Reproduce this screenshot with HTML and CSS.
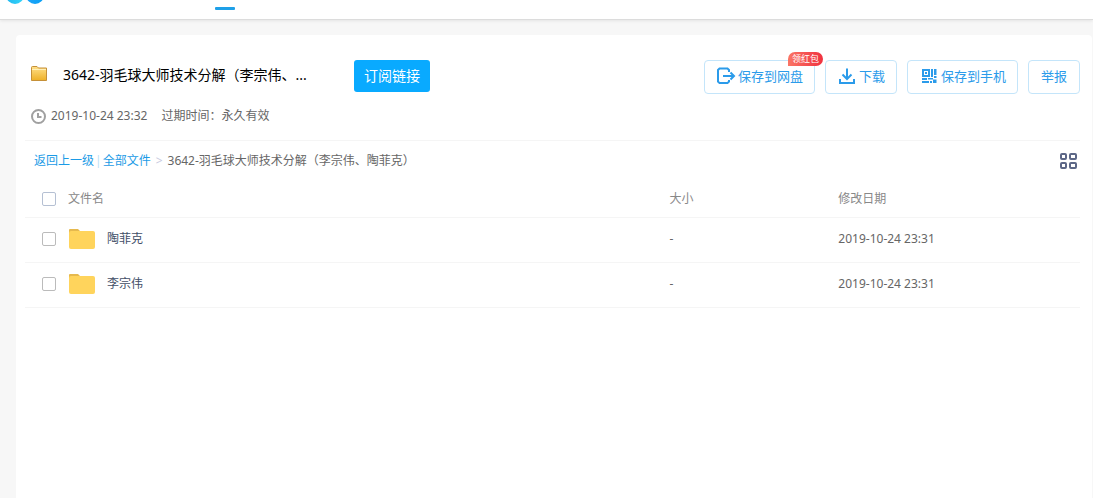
FILE: index.html
```html
<!DOCTYPE html>
<html lang="zh-CN">
<head>
<meta charset="utf-8">
<title>3642-羽毛球大师技术分解</title>
<link rel="stylesheet" href="styles.css">
</head>
<body>
<header class="topbar">
  <svg class="logo" width="40" height="5" viewBox="0 0 40 5" aria-hidden="true">
    <defs>
      <linearGradient id="lg" x1="0" x2="1"><stop offset="0" stop-color="#22b8f0"/><stop offset="1" stop-color="#35d6fa"/></linearGradient>
      <linearGradient id="rg" x1="0" x2="1"><stop offset="0" stop-color="#1ea4f8"/><stop offset="1" stop-color="#08a0f5"/></linearGradient>
    </defs>
    <circle cx="11" cy="-5" r="9" fill="url(#lg)"/>
    <circle cx="31" cy="-5" r="9" fill="url(#rg)"/>
  </svg>
  <span class="tab-line"></span>
</header>
<main class="panel">
  <section class="share">
    <div class="share-head">
      <svg class="share-icon" width="17" height="16" viewBox="0 0 17 16" aria-hidden="true">
        <defs><linearGradient id="fg" x1="0" y1="0" x2="0" y2="1"><stop offset="0" stop-color="#ffe08a"/><stop offset="1" stop-color="#eeb026"/></linearGradient></defs>
        <path d="M.5 14.500V1.500Q.5.500 1.500.500H6L7.500 2H15.500V14.500Z" fill="url(#fg)" stroke="#c59038"/>
        <path d="M1 3.500H15" stroke="#fff0b8"/>
      </svg>
      <h1 class="share-title">3642-羽毛球大师技术分解（李宗伟、...</h1>
      <button class="subscribe" type="button">订阅链接</button>
      <div class="actions">
        <button class="action" type="button">
          <svg width="20" height="18" viewBox="0 0 20 18" fill="none" stroke="#2b9bea" stroke-width="2" aria-hidden="true"><path d="M13 5V3L11.500 1.500H3.500L2 3V14.500L3.500 16H11.500L13 14.500V13M7 9H18M14.500 5.500L18 9L14.500 12.500"/></svg>
          <span>保存到网盘</span>
          <span class="badge">领红包</span>
        </button>
        <button class="action" type="button">
          <svg width="20" height="18" viewBox="0 0 20 18" fill="none" stroke="#2b9bea" stroke-width="2" aria-hidden="true"><path d="M10 1.500V11.500M5.500 7.500L10 12L14.500 7.500M3 12V16H17V12"/></svg>
          <span>下载</span>
        </button>
        <button class="action" type="button">
          <svg width="20" height="18" viewBox="0 0 20 18" fill="#2b9bea" aria-hidden="true"><path fill-rule="evenodd" d="M3 2H11V10H3ZM5 4V8H9V4Z"/><path d="M6 5H8V7H6ZM12 2H14V10H12ZM15 2H17.500V8H15ZM15 9H17.500V11H15ZM3 11H8V13H3ZM9 11H14V12.500H9ZM3 14H10V16H3ZM11 14H13V16H11ZM14 12.500H17.500V16H14Z"/></svg>
          <span>保存到手机</span>
        </button>
        <button class="action" type="button"><span>举报</span></button>
      </div>
    </div>
    <div class="share-meta">
      <svg width="16" height="16" viewBox="0 0 16 16" fill="none" stroke="#a0a0a0" stroke-width="2" aria-hidden="true"><circle cx="7.500" cy="8.500" r="6.500"/><path d="M7 5V9H10.500"/></svg>
      <time class="share-time">2019-10-24 23:32</time>
      <span>过期时间：永久有效</span>
    </div>
  </section>
  <nav class="crumbs">
    <a href="#">返回上一级</a><span class="divider">|</span><a href="#">全部文件</a><span class="arrow">&gt;</span><span>3642-羽毛球大师技术分解（李宗伟、陶菲克）</span>
    <button class="view" type="button" aria-label="网格视图">
      <svg width="18" height="18" viewBox="0 0 18 18" fill="none" stroke="#5d6786" stroke-width="2" aria-hidden="true"><rect x="2" y="2" width="5" height="5" rx="1"/><rect x="11" y="2" width="6" height="5" rx="1"/><rect x="2" y="11" width="5" height="5" rx="1"/><rect x="11" y="11" width="6" height="5" rx="1"/></svg>
    </button>
  </nav>
  <table class="files">
    <thead>
      <tr>
        <th class="col-name"><label class="cell"><input class="check" type="checkbox"><span>文件名</span></label></th>
        <th class="col-size">大小</th>
        <th>修改日期</th>
      </tr>
    </thead>
    <tbody>
      <tr>
        <td><label class="cell"><input class="check" type="checkbox">
          <svg width="27" height="22" viewBox="0 0 27 22" aria-hidden="true"><path d="M1 5V2Q1 1 2 1H10L12 3V5Z" fill="#e6b94e"/><rect x="1" y="3" width="26" height="18" rx="2" fill="#ffd45c"/></svg>
          <span class="name">陶菲克</span></label></td>
        <td>-</td>
        <td>2019-10-24 23:31</td>
      </tr>
      <tr>
        <td><label class="cell"><input class="check" type="checkbox">
          <svg width="27" height="22" viewBox="0 0 27 22" aria-hidden="true"><path d="M1 5V2Q1 1 2 1H10L12 3V5Z" fill="#e6b94e"/><rect x="1" y="3" width="26" height="18" rx="2" fill="#ffd45c"/></svg>
          <span class="name">李宗伟</span></label></td>
        <td>-</td>
        <td>2019-10-24 23:31</td>
      </tr>
    </tbody>
  </table>
</main>
</body>
</html>
```
FILE: styles.css
```css
* { box-sizing: border-box; }

body {
  margin: 0;
  min-height: 100vh;
  display: flex;
  flex-direction: column;
  background: #f7f7f7;
  color: #666;
  font: 12px/16px "Noto Sans", "Noto Sans CJK SC", sans-serif;
}

button {
  padding: 0;
  border: 0;
  background: none;
  font: inherit;
}

svg { flex: none; display: block; }

.topbar {
  display: flex;
  gap: 171px;
  height: 20px;
  padding-left: 4px;
  background: #fff;
  border-bottom: 1px solid #dcdcdc;
  box-shadow: 0 1px 3px rgba(0, 0, 0, 0.08);
}

.tab-line {
  width: 20px;
  height: 3px;
  margin-top: 7px;
  border-radius: 1px;
  background: #1ea0e8;
}

.panel {
  flex: 1;
  margin: 15px 1px 0 16px;
  padding: 25px 12px 0 9px;
  border-radius: 4px 4px 0 0;
  background: #fff;
}

.share {
  padding: 0 0 16px 6px;
  border-bottom: 1px solid #f5f5f5;
}

.share-head { display: flex; height: 34px; }

.share-icon { margin: 6px 15px 0 0; }

.share-title {
  width: 248px;
  margin: 0;
  color: #000;
  font-size: 14px;
  font-weight: 400;
  line-height: 30px;
  white-space: nowrap;
}

.subscribe {
  width: 76px;
  height: 32px;
  margin-left: 43px;
  border-radius: 3px;
  background: #09aaff;
  color: #fff;
  font-size: 14px;
}

.actions {
  display: flex;
  gap: 10px;
  margin-left: auto;
}

.action {
  position: relative;
  display: flex;
  align-items: center;
  gap: 2px;
  padding: 0 11px 2px;
  border: 1px solid #c4e5fa;
  border-radius: 4px;
  background: #fff;
  color: #2b9bea;
  font-size: 13px;
}

.action:last-child { padding: 0 12px 2px; }

.badge {
  position: absolute;
  top: -9px;
  right: -9px;
  padding: 0 4px;
  border-radius: 7px 7px 7px 0;
  background: linear-gradient(90deg, #fa7565, #f0323f);
  color: #fff;
  font-size: 9px;
  line-height: 14px;
}

.share-meta {
  display: flex;
  align-items: center;
  margin-top: 14px;
}

.share-time { margin: 0 14px 0 4px; }

.crumbs {
  display: flex;
  align-items: center;
  height: 40px;
  padding-left: 9px;
}

.crumbs a { color: #1b9be6; text-decoration: none; }

.divider { margin: 0 1px; color: #bcdff5; }

.arrow { margin: 0 5px; color: #c8cbe0; }

.view { margin: 0 3px 0 auto; }

.files {
  width: 100%;
  border-collapse: collapse;
  table-layout: fixed;
}

.files th,
.files td {
  padding: 0 0 0 1px;
  border-bottom: 1px solid #f5f5f5;
  text-align: left;
}

.files th {
  height: 36px;
  color: #888;
  font-weight: 400;
}

.files td { height: 45px; padding-bottom: 1px; }

.col-name { width: 61%; }

.col-size { width: 16%; }

.cell {
  display: flex;
  align-items: center;
  gap: 12px;
  padding-left: 16px;
}

.check {
  appearance: none;
  width: 14px;
  height: 14px;
  margin: 0;
  border: 1px solid #bbb;
  border-radius: 2px;
  background: #fff;
}

.files th .check { border-color: #b5c0d3; }

.name { color: #424e67; }
```
